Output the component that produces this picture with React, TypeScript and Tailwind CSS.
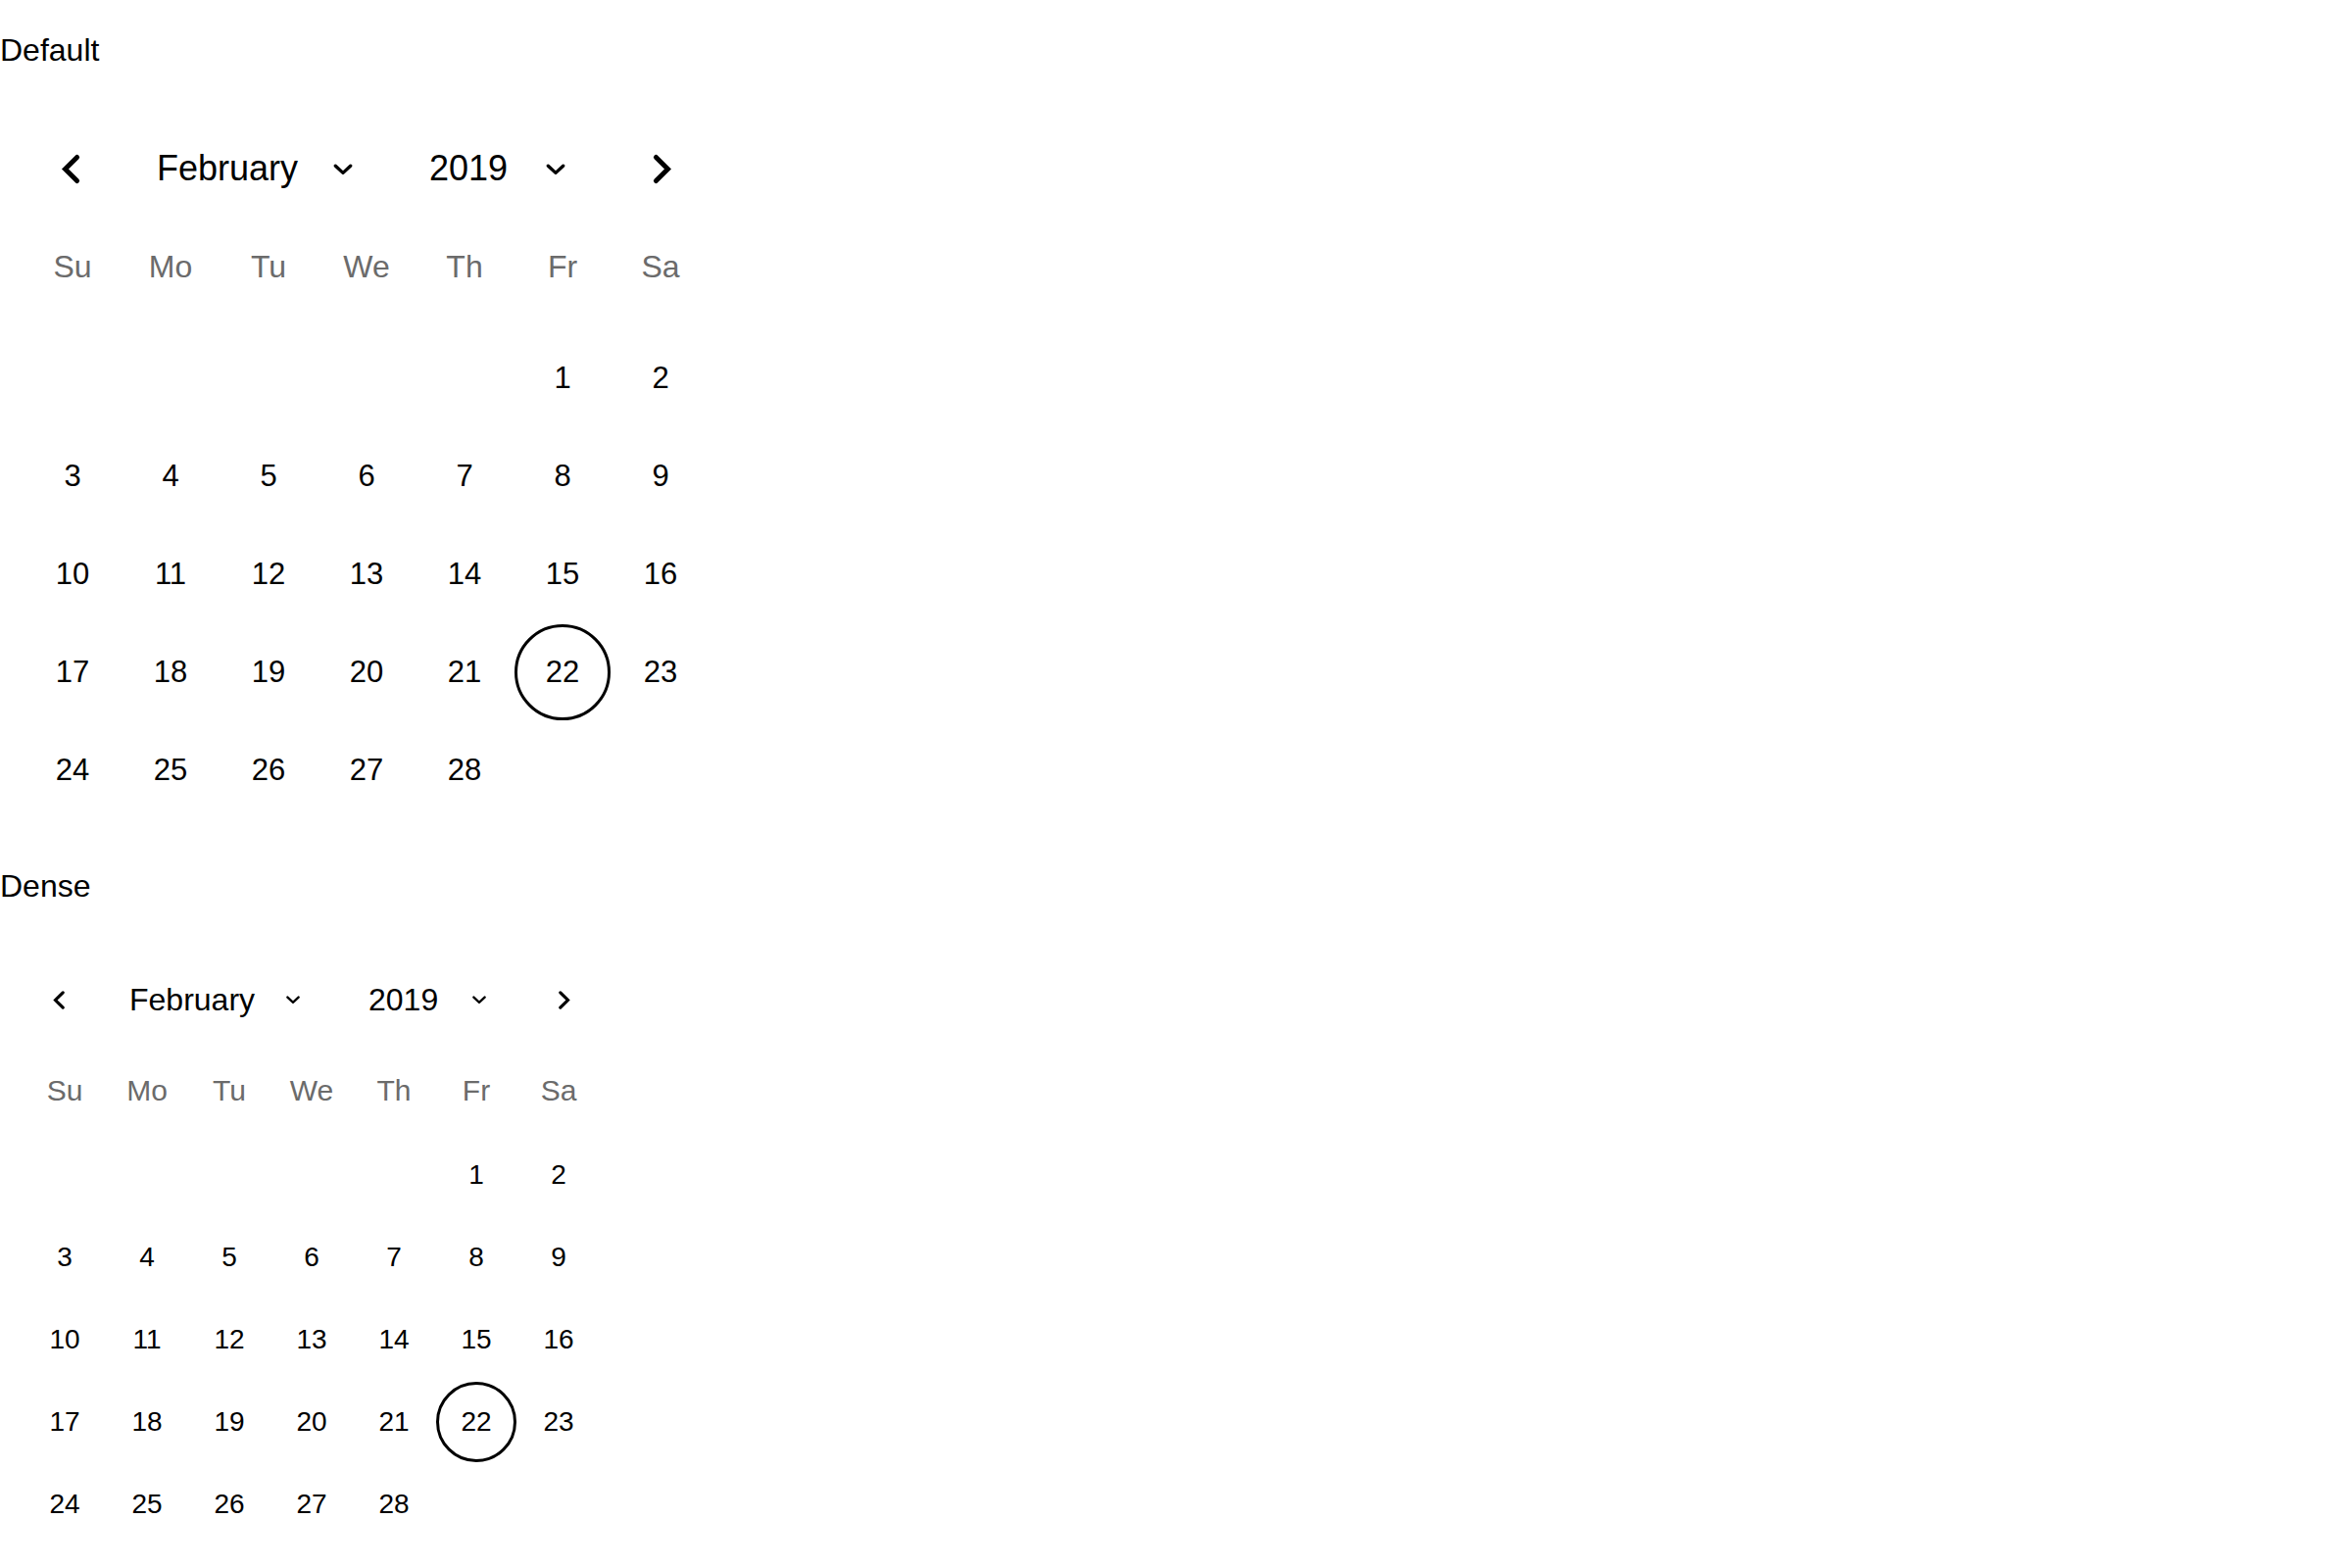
import React from "react";

const WEEKDAYS = ["Su", "Mo", "Tu", "We", "Th", "Fr", "Sa"];
// February 2019 starts on a Friday
const DAYS: (number | null)[] = [
  ...Array(5).fill(null),
  ...Array.from({ length: 28 }, (_, i) => i + 1),
];
const SELECTED = 22;

function NavArrow({ dir, className, stroke }: { dir: "left" | "right"; className?: string; stroke: number }) {
  return (
    <svg viewBox="0 0 20 30" fill="none" stroke="currentColor" className={className}>
      <polyline
        points={dir === "left" ? "16,4 5,15 16,26" : "4,4 15,15 4,26"}
        strokeWidth={stroke}
        strokeLinecap="round"
        strokeLinejoin="miter"
      />
    </svg>
  );
}

function ExpandMore({ className }: { className?: string }) {
  return (
    <svg viewBox="0 0 20 10" fill="none" stroke="currentColor" className={className}>
      <polyline points="3,2 10,8.5 17,2" strokeWidth={3} strokeLinecap="round" />
    </svg>
  );
}

function DefaultCalendar() {
  return (
    <div className="ml-[24px] w-[700px]">
      {/* header */}
      <div className="flex h-[100px] items-center">
        <button className="flex h-[100px] w-[96px] items-center justify-center">
          <NavArrow dir="left" stroke={4.5} className="h-[33px] w-[22px]" />
        </button>
        <div className="ml-[40px] flex w-[180px] items-center text-[36px]">February</div>
        <ExpandMore className="h-[11px] w-[22px] -ml-[1px]" />
        <div className="ml-[77px] flex w-[119px] items-center text-[36px]">2019</div>
        <ExpandMore className="h-[11px] w-[22px] -ml-[1px]" />
        <div className="flex-1" />
        <button className="flex h-[100px] w-[96px] items-center justify-center">
          <NavArrow dir="right" stroke={4.5} className="h-[33px] w-[22px]" />
        </button>
      </div>

      {/* weekdays */}
      <div className="grid grid-cols-7">
        {WEEKDAYS.map((d) => (
          <div key={d} className="flex h-[100px] items-center justify-center text-[32px] text-[#6b6b6b]">
            {d}
          </div>
        ))}
      </div>

      {/* days */}
      <div className="mt-[14px] grid grid-cols-7">
        {DAYS.map((d, i) => (
          <div key={i} className="flex h-[100px] items-center justify-center">
            {d !== null && (
              <div
                className={
                  d === SELECTED
                    ? "flex h-[98px] w-[98px] items-center justify-center rounded-full border-[3px] border-black text-[31px]"
                    : "flex h-[98px] w-[98px] items-center justify-center text-[31px]"
                }
              >
                {d}
              </div>
            )}
          </div>
        ))}
      </div>
    </div>
  );
}

function DenseCalendar() {
  return (
    <div className="ml-[24px] w-[588px]">
      {/* header */}
      <div className="flex h-[84px] items-center">
        <button className="flex h-[84px] w-[72px] items-center justify-center">
          <NavArrow dir="left" stroke={4.5} className="h-[21px] w-[14px]" />
        </button>
        <div className="ml-[36px] flex w-[160px] items-center text-[32px]">February</div>
        <ExpandMore className="h-[8px] w-[16px] -ml-[1px]" />
        <div className="ml-[69px] flex w-[106px] items-center text-[32px]">2019</div>
        <ExpandMore className="h-[8px] w-[16px] -ml-[1px]" />
        <div className="flex-1" />
        <button className="flex h-[84px] w-[72px] items-center justify-center">
          <NavArrow dir="right" stroke={4.5} className="h-[21px] w-[14px]" />
        </button>
      </div>

      {/* weekdays */}
      <div className="mt-[8px] grid grid-cols-7">
        {WEEKDAYS.map((d) => (
          <div key={d} className="flex h-[84px] items-center justify-center text-[30px] text-[#6b6b6b]">
            {d}
          </div>
        ))}
      </div>

      {/* days */}
      <div className="mt-[3px] grid grid-cols-7">
        {DAYS.map((d, i) => (
          <div key={i} className="flex h-[84px] items-center justify-center">
            {d !== null && (
              <div
                className={
                  d === SELECTED
                    ? "flex h-[82px] w-[82px] items-center justify-center rounded-full border-[3px] border-black text-[28px]"
                    : "flex h-[82px] w-[82px] items-center justify-center text-[28px]"
                }
              >
                {d}
              </div>
            )}
          </div>
        ))}
      </div>
    </div>
  );
}

export default function App() {
  return (
    <div className="min-h-screen bg-white pt-[33px] font-['Liberation_Sans',Arial,sans-serif] text-black">
      <p className="text-[32px] leading-[36px]">Default</p>
      <div className="mt-[53px]">
        <DefaultCalendar />
      </div>

      <p className="mt-[50px] text-[32px] leading-[36px]">Dense</p>
      <div className="mt-[56px]">
        <DenseCalendar />
      </div>
    </div>
  );
}
